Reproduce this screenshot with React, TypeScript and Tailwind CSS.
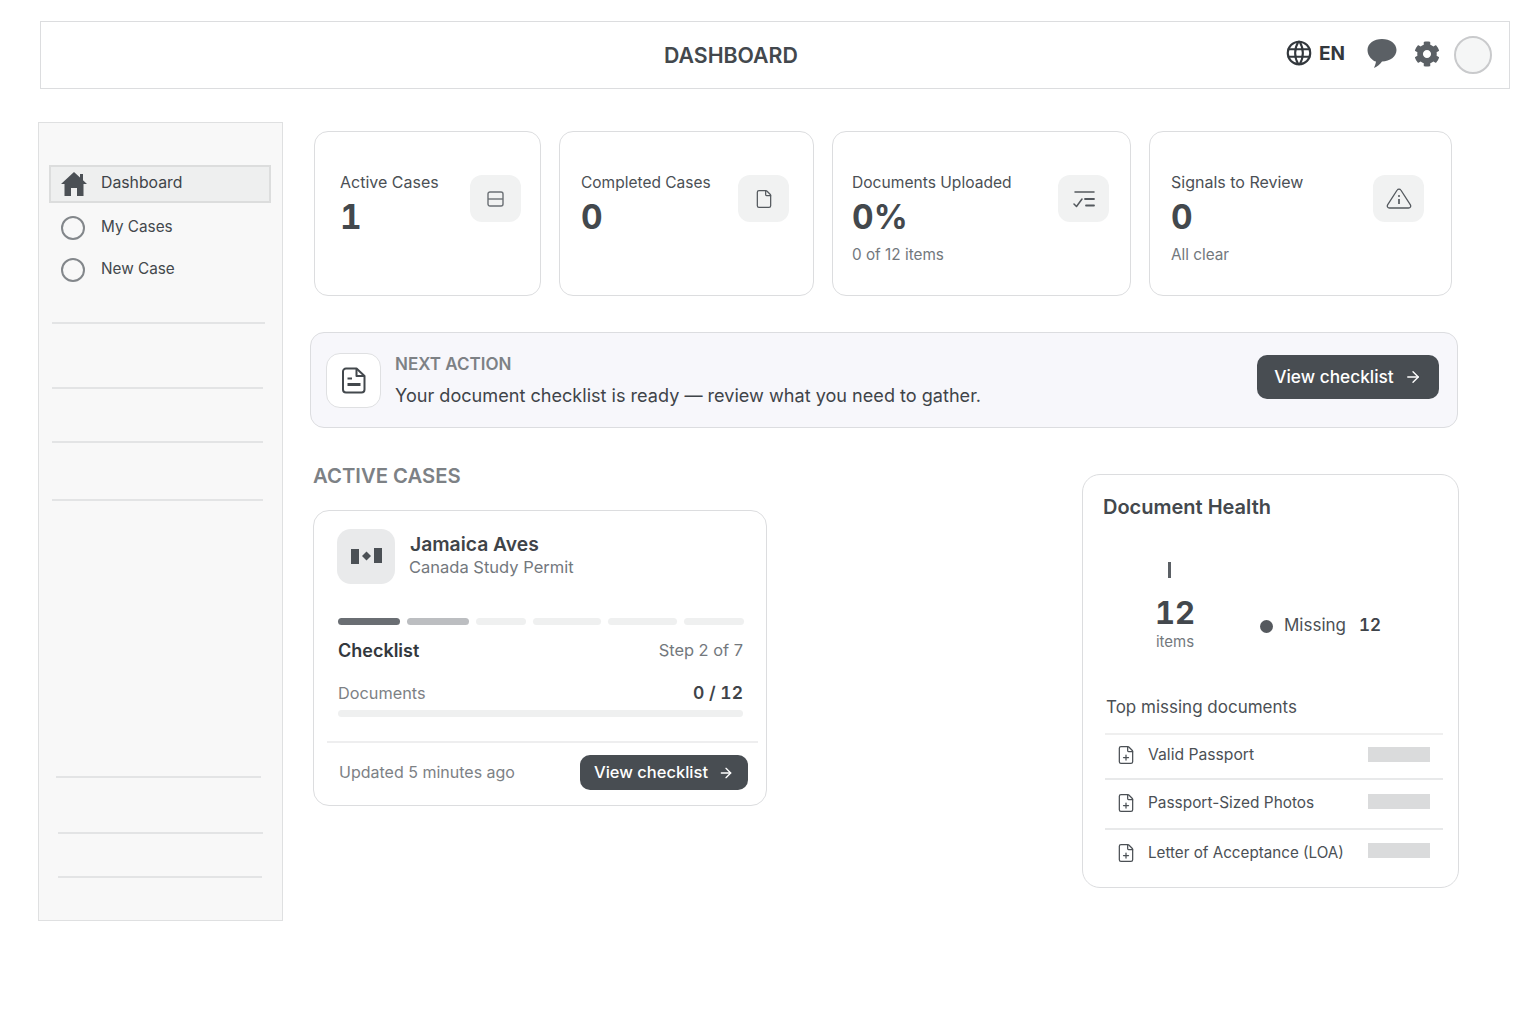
import { ArrowRight, File, FilePlus } from 'lucide-react'
import { FaCog } from 'react-icons/fa'
import { TbWorld } from 'react-icons/tb'
import type { ReactNode } from 'react'

const font = { fontFamily: 'Inter, sans-serif' }

function SplitIcon() {
  return (
    <svg width="17" height="16" viewBox="0 0 17 16" fill="none" stroke="#6b7075" strokeWidth="1.4">
      <rect x="1" y="1" width="15" height="14" rx="2" />
      <path d="M1 8h15" />
    </svg>
  )
}

function ChecksIcon() {
  return (
    <svg width="22" height="18" viewBox="0 0 22 18" fill="none" stroke="#54595e" strokeWidth="1.5" strokeLinecap="round" strokeLinejoin="round">
      <path d="M2 2h19" />
      <path d="M1 14l2.500 2.500L9 9" />
      <path d="M12 9h9M13 15.500h8" strokeWidth="1.800" />
    </svg>
  )
}

function InfoTriangle() {
  return (
    <svg width="26" height="21" viewBox="0 0 26 21" fill="none" stroke="#54595e" strokeWidth="1.3" strokeLinejoin="round">
      <path d="M11.200 2 1.600 16.800C.7 18.300 1.700 20 3.400 20h19.200c1.700 0 2.700-1.700 1.800-3.200L14.800 2c-.8-1.300-2.800-1.300-3.600 0z" />
      <circle cx="13" cy="8" r="1" fill="#54595e" stroke="none" />
      <path d="M13 11v5" strokeWidth="1.700" />
    </svg>
  )
}

function NoteIcon() {
  return (
    <svg width="24" height="27" viewBox="0 0 24 27" fill="none" stroke="#43484d" strokeWidth="2" strokeLinejoin="round">
      <path d="M4 1.500h10.500l8 7.500v13.500a3 3 0 0 1-3 3H4a3 3 0 0 1-3-3v-18a3 3 0 0 1 3-3z" />
      <path d="M14.500 1.500V9h8" />
      <path d="M5.500 11.500h4.500" />
      <path d="M5.500 17.500h13" strokeWidth="3" />
    </svg>
  )
}

function HomeMark() {
  return (
    <svg width="26" height="24" viewBox="0 0 26 24" fill="#4b5055">
      <path d="M13 0 19 5.500V2h3v6.300L26 12h-3.500v12H16v-8h-6v8H3.500V12H0z" />
    </svg>
  )
}

function CaseMark() {
  return (
    <svg width="33" height="17" viewBox="0 0 33 17" fill="#4b5055">
      <rect x="1" y="1" width="8" height="15" />
      <path d="M16.500 3.500 21 8l-4.500 4.500L12 8z" />
      <rect x="24" y="0" width="8" height="15" />
    </svg>
  )
}

function StatCard({ label, labelSize, value, note, icon, width, pl, pr }: { label: string; labelSize: string; value: string; note?: string; icon: ReactNode; width: string; pl: string; pr: string }) {
  return (
    <div className={`h-[165px] rounded-[14px] border-[1.5px] border-[#dcdddf] bg-white pt-[43px] flex justify-between ${width} ${pl} ${pr}`}>
      <div>
        <div className={`leading-[14px] text-[#4b5055] whitespace-nowrap ${labelSize}`}>{label}</div>
        <div className="text-[33.500px] leading-[40px] font-bold tabular-nums text-[#43484d] mt-[8px]">{value}</div>
        {note && <div className="text-[15.300px] leading-[20px] text-[#73787d] mt-[8px]">{note}</div>}
      </div>
      <div className="w-[51px] h-[47px] rounded-[12px] bg-[#f1f2f2] flex items-center justify-center shrink-0">{icon}</div>
    </div>
  )
}

function SideLine({ mt, ml, w }: { mt: string; ml: string; w: string }) {
  return <div className={`h-[2px] bg-[#e3e4e5] ${mt} ${ml} ${w}`} />
}

function MissingRow({ name, size, height, border, pb, barShift }: { name: string; size: string; height: string; border: boolean; pb: string; barShift: string }) {
  return (
    <div className={`flex items-center pl-[11px] pr-[13px] ${height} ${pb} ${border ? 'border-b-2 border-[#e8e9ea]' : ''}`}>
      <FilePlus size={20} strokeWidth={1.5} className="text-[#4b5055] shrink-0" />
      <span className={`ml-[12px] text-[#4b5055] ${size}`}>{name}</span>
      <div className={`ml-auto w-[62px] h-[15px] bg-[#dadbdc] ${barShift}`} />
    </div>
  )
}

export default function App() {
  return (
    <div style={font} className="min-h-screen bg-white pt-[21px] text-[#43484d]">
      <header className="ml-[40px] w-[1470px] h-[68px] border-[1.5px] border-[#dcdddf] bg-white flex items-center relative">
        <h1 className="absolute left-[623px] top-[19px] text-[21.300px] leading-[28px] font-semibold text-[#43484d]">DASHBOARD</h1>
        <div className="ml-auto flex items-center pr-[17px]">
          <TbWorld size={30} strokeWidth={1.7} className="text-[#33383d] mt-[-4px]" />
          <span className="ml-[5px] text-[19px] font-bold text-[#33383d] mt-[-2px]">EN</span>
          <svg className="ml-[22px] mt-[-4px]" width="30" height="31" viewBox="0 0 30 31" fill="#5b6065">
            <path d="M15 1C7 1 .5 5.500.5 12S6 23 9 23.500c-.3 2.500-1.300 4.500-2 6.500 3.500-1.500 6-3.800 8-6.500 8 0 14.500-5 14.500-11.500S23 1 15 1z" />
          </svg>
          <FaCog size={26} className="ml-[17px] mt-[-2px] text-[#5b6065]" />
          <div className="ml-[14px] w-[38px] h-[38px] rounded-full bg-[#f5f6f6] border-2 border-[#c9cacc]" />
        </div>
      </header>

      <div className="flex ml-[38px] mt-[33px]">
        <aside className="w-[245px] h-[799px] border-[1.5px] border-[#dfe0e1] bg-[#f8f8f8] pt-[42px] shrink-0">
          <div className="ml-[10px] w-[222px] h-[38px] border-2 border-[#dcdddd] bg-[#eeefef] flex items-center pl-[10px]">
            <HomeMark />
            <span className="ml-[14px] text-[15.800px] text-[#3f4449] mt-[-2px]">Dashboard</span>
          </div>
          <div className="ml-[22px] mt-[13px] flex items-center h-[24px]">
            <div className="w-[24px] h-[24px] rounded-full border-2 border-[#83878b]" />
            <span className="ml-[16px] text-[15.300px] text-[#43484d] mt-[-1px]">My Cases</span>
          </div>
          <div className="ml-[22px] mt-[18px] flex items-center h-[24px]">
            <div className="w-[24px] h-[24px] rounded-full border-2 border-[#83878b]" />
            <span className="ml-[16px] text-[15.300px] text-[#43484d] mt-[-1px]">New Case</span>
          </div>
          <SideLine mt="mt-[40px]" ml="ml-[13px]" w="w-[213px]" />
          <SideLine mt="mt-[63px]" ml="ml-[13px]" w="w-[211px]" />
          <SideLine mt="mt-[52px]" ml="ml-[13px]" w="w-[211px]" />
          <SideLine mt="mt-[56px]" ml="ml-[13px]" w="w-[211px]" />
          <SideLine mt="mt-[275px]" ml="ml-[17px]" w="w-[205px]" />
          <SideLine mt="mt-[54px]" ml="ml-[19px]" w="w-[205px]" />
          <SideLine mt="mt-[42px]" ml="ml-[19px]" w="w-[204px]" />
        </aside>

        <main className="ml-[27px] w-[1150px] pt-[9px]">
          <div className="ml-[4px] flex gap-[18px]">
            <StatCard label="Active Cases" labelSize="text-[16px]" value="1" width="w-[227px]" pl="pl-[25px]" pr="pr-[19px]" icon={<SplitIcon />} />
            <StatCard label="Completed Cases" labelSize="text-[15.500px] pt-[1px] mb-[-1px]" value="0" width="w-[255px]" pl="pl-[21px]" pr="pr-[24px]" icon={<File size={20} strokeWidth={1.5} className="text-[#54595e]" />} />
            <StatCard label="Documents Uploaded" labelSize="text-[15.600px] pt-[1px] mb-[-1px]" value="0%" note="0 of 12 items" width="w-[299px]" pl="pl-[19px]" pr="pr-[21px]" icon={<ChecksIcon />} />
            <StatCard label="Signals to Review" labelSize="text-[16px]" value="0" note="All clear" width="w-[303px]" pl="pl-[21px]" pr="pr-[27px]" icon={<InfoTriangle />} />
          </div>

          <section className="mt-[36px] w-[1148px] h-[96px] rounded-[14px] border-[1.5px] border-[#dcdde0] bg-[#f7f7fb] flex items-center pl-[15px] pr-[18px]">
            <div className="w-[55px] h-[55px] rounded-[14px] border border-[#dfe0e2] bg-white flex items-center justify-center shrink-0">
              <NoteIcon />
            </div>
            <div className="ml-[14px]">
              <div className="text-[17px] leading-[22px] font-semibold text-[#7d8185]">NEXT ACTION</div>
              <div className="mt-[9px] text-[18.100px] leading-[23px] text-[#3f4449]">Your document checklist is ready — review what you need to gather.</div>
            </div>
            <button className="ml-auto mt-[-6px] w-[182px] h-[44px] rounded-[10px] bg-[#484d52] text-white text-[17.300px] font-medium flex items-center justify-center gap-[10px]">
              View checklist <ArrowRight size={18} strokeWidth={1.800} />
            </button>
          </section>

          <div className="flex mt-[46px]">
            <div className="ml-[3px] w-[454px]">
              <h2 className="text-[20.300px] leading-[28px] font-semibold text-[#7d8185] mt-[-12px]">ACTIVE CASES</h2>
              <article className="mt-[20px] h-[296px] rounded-[16px] border-[1.5px] border-[#dcdddf] bg-white relative">
                <div className="flex pl-[23px] pt-[18px]">
                  <div className="w-[58px] h-[55px] rounded-[14px] bg-[#e9eaeb] flex items-center justify-center">
                    <CaseMark />
                  </div>
                  <div className="ml-[14px]">
                    <div className="text-[19.300px] leading-[26px] font-semibold text-[#3f4449] mt-[2px] ml-[1px]">Jamaica Aves</div>
                    <div className="text-[16.500px] leading-[22px] text-[#73787d] mt-[-1px]">Canada Study Permit</div>
                  </div>
                </div>
                <div className="flex ml-[24px] mt-[34px] w-[406px] justify-between">
                  <div className="w-[62px] h-[7px] rounded-full bg-[#6a6e73]" />
                  <div className="w-[62px] h-[7px] rounded-full bg-[#bcbec1]" />
                  <div className="w-[50px] h-[7px] rounded-full bg-[#eff0f0]" />
                  <div className="w-[68px] h-[7px] rounded-full bg-[#eff0f0]" />
                  <div className="w-[69px] h-[7px] rounded-full bg-[#eff0f0]" />
                  <div className="w-[60px] h-[7px] rounded-full bg-[#eff0f0]" />
                </div>
                <div className="flex justify-between items-center ml-[24px] w-[405px] mt-[11px] h-[28px]">
                  <span className="text-[18px] font-semibold text-[#33383d]">Checklist</span>
                  <span className="text-[16.400px] text-[#73787d]">Step 2 of 7</span>
                </div>
                <div className="flex justify-between items-center ml-[24px] w-[405px] mt-[15px] h-[28px]">
                  <span className="text-[16.300px] text-[#7d8185]">Documents</span>
                  <span className="text-[17.500px] font-semibold tabular-nums text-[#3f4449]">0 / 12</span>
                </div>
                <div className="ml-[24px] w-[405px] h-[7px] rounded-full bg-[#eff0f0] mt-[3px]" />
                <div className="ml-[13px] w-[431px] h-[2px] bg-[#eeeeef] mt-[24px]" />
                <div className="flex items-center justify-between pl-[25px] pr-[18px] mt-[12px]">
                  <span className="text-[16px] text-[#7d8185] mb-[2px]">Updated 5 minutes ago</span>
                  <button className="w-[168px] h-[35px] rounded-[10px] bg-[#484d52] text-white text-[16.500px] font-medium flex items-center justify-center gap-[10px]">
                    View checklist <ArrowRight size={16} strokeWidth={2} />
                  </button>
                </div>
              </article>
            </div>

            <article className="ml-[315px] w-[377px] h-[414px] rounded-[18px] border-[1.5px] border-[#dcdddf] bg-white pt-[18px] relative">
              <h3 className="ml-[20px] text-[20px] leading-[28px] font-semibold text-[#43484d]">Document Health</h3>
              <div className="flex mt-[40px] h-[98px]">
                <div className="ml-[67px] w-[50px] flex flex-col items-center">
                  <div className="w-[3px] h-[16px] bg-[#5b6065] mr-[11px] mt-[1px]" />
                  <div className="text-[31px] leading-[38px] font-bold tabular-nums text-[#43484d] mt-[16px]">12</div>
                  <div className="text-[15px] leading-[20px] text-[#73787d]">items</div>
                </div>
                <div className="ml-[60px] flex items-center mt-[52px] h-[26px]">
                  <div className="w-[13px] h-[13px] rounded-full bg-[#55595e]" />
                  <span className="ml-[11px] text-[17px] text-[#4b5055]">Missing</span>
                  <span className="ml-[13px] text-[17px] font-semibold tabular-nums text-[#3f4449]">12</span>
                </div>
              </div>
              <div className="ml-[23px] mt-[36px] text-[17px] leading-[24px] text-[#4b5055]">Top missing documents</div>
              <div className="ml-[22px] w-[338px] mt-[14px] border-t-2 border-[#efefef]">
                <MissingRow name="Valid Passport" size="text-[15.700px]" height="h-[45px]" pb="pb-[4px]" barShift="" border />
                <MissingRow name="Passport-Sized Photos" size="text-[15.400px]" height="h-[50px]" pb="pb-[3px]" barShift="mt-[-2px]" border />
                <MissingRow name="Letter of Acceptance (LOA)" size="text-[15.200px]" height="h-[46px]" pb="" barShift="mt-[-5px]" border={false} />
              </div>
            </article>
          </div>
        </main>
      </div>
    </div>
  )
}
